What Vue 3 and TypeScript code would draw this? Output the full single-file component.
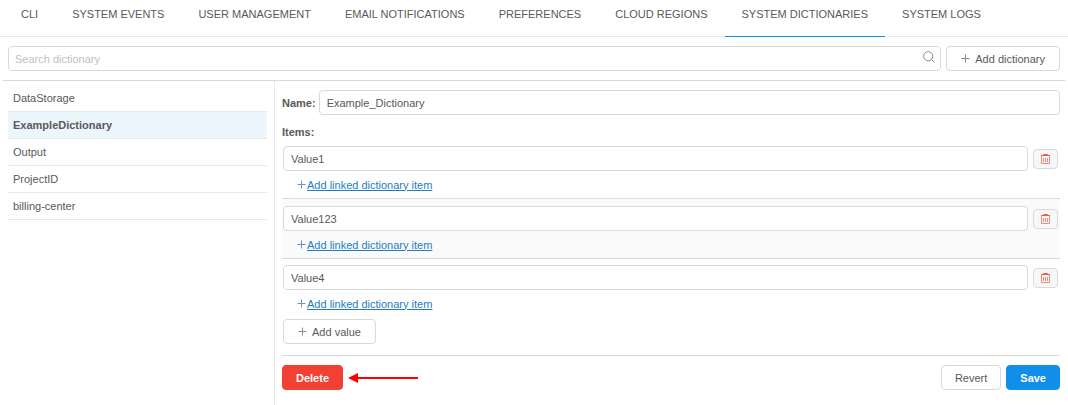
<script setup lang="ts">
import { computed, ref } from 'vue'

const tabs: string[] = [
  'CLI',
  'SYSTEM EVENTS',
  'USER MANAGEMENT',
  'EMAIL NOTIFICATIONS',
  'PREFERENCES',
  'CLOUD REGIONS',
  'SYSTEM DICTIONARIES',
  'SYSTEM LOGS',
]
const activeTab = ref('SYSTEM DICTIONARIES')

const dictionaries: string[] = ['DataStorage', 'ExampleDictionary', 'Output', 'ProjectID', 'billing-center']
const selected = ref('ExampleDictionary')

const search = ref('')
const visible = computed(() =>
  dictionaries.filter((d) => d.toLowerCase().includes(search.value.toLowerCase())),
)

const name = ref('Example_Dictionary')

interface Item {
  id: number
  value: string
}
const items = ref<Item[]>([
  { id: 1, value: 'Value1' },
  { id: 2, value: 'Value123' },
  { id: 3, value: 'Value4' },
])
let nextId = 4

function addItem(): void {
  items.value.push({ id: nextId++, value: '' })
}
function removeItem(id: number): void {
  items.value = items.value.filter((i) => i.id !== id)
}
</script>

<template>
  <div class="page">
    <nav class="tabs">
      <a
        v-for="tab in tabs"
        :key="tab"
        href="#"
        class="tab"
        :class="{ active: tab === activeTab }"
        @click.prevent="activeTab = tab"
        >{{ tab }}</a
      >
    </nav>

    <main class="content">
      <div class="toolbar">
        <div class="search">
          <input v-model="search" class="field" type="text" placeholder="Search dictionary" aria-label="Search dictionary" />
          <svg class="search-icon" viewBox="0 0 12 12" aria-hidden="true">
            <circle cx="5.2" cy="5.2" r="4.6" />
            <path d="M8.5 8.5L11.5 11.5" />
          </svg>
        </div>
        <button type="button" class="btn with-icon">
          <svg class="plus" viewBox="0 0 9 9" aria-hidden="true"><path d="M4.5 0.5V8.5M0.5 4.5H8.5" /></svg>
          Add dictionary
        </button>
      </div>

      <div class="split">
        <aside class="sidebar">
          <ul class="list">
            <li v-for="d in visible" :key="d">
              <button type="button" class="entry" :class="{ current: d === selected }" @click="selected = d">
                {{ d }}
              </button>
            </li>
          </ul>
        </aside>

        <section class="editor">
          <div class="name-row">
            <label for="dictionary-name">Name:</label>
            <input id="dictionary-name" v-model="name" class="field" type="text" />
          </div>

          <div class="items-title">Items:</div>

          <div class="items">
            <div v-for="item in items" :key="item.id" class="item">
              <div class="item-line">
                <input v-model="item.value" class="field" type="text" aria-label="Item value" />
                <button type="button" class="trash" aria-label="Remove item" @click="removeItem(item.id)">
                  <svg viewBox="0 0 9 10" aria-hidden="true">
                    <path class="lid" d="M0 1.5H9M2.5 1.5V0.5H6.5V1.5" />
                    <path d="M0.5 2V9.5H8.5V2M2.5 4V8M4.5 4V8M6.5 4V8" />
                  </svg>
                </button>
              </div>
              <div class="link-line">
                <svg class="plus" viewBox="0 0 9 9" aria-hidden="true"><path d="M4.5 0.5V8.5M0.5 4.5H8.5" /></svg>
                <a href="#" @click.prevent>Add linked dictionary item</a>
              </div>
            </div>
          </div>

          <button type="button" class="btn with-icon add-value" @click="addItem">
            <svg class="plus" viewBox="0 0 9 9" aria-hidden="true"><path d="M4.5 0.5V8.5M0.5 4.5H8.5" /></svg>
            Add value
          </button>

          <div class="actions">
            <button type="button" class="btn danger">Delete</button>
            <svg class="arrow" viewBox="0 0 70 10" aria-hidden="true">
              <path class="shaft" d="M9 5H70" />
              <path class="head" d="M0 5L10 0V10Z" />
            </svg>
            <span class="spacer"></span>
            <button type="button" class="btn">Revert</button>
            <button type="button" class="btn primary">Save</button>
          </div>
        </section>
      </div>
    </main>
  </div>
</template>

<style>
body {
  margin: 0;
  background: #fff;
}
</style>

<style scoped>
.page {
  display: flex;
  flex-direction: column;
  min-height: 100vh;
  font: 11px/16px 'Liberation Sans', Arial, sans-serif;
  color: #595959;
}
.page *,
.page {
  box-sizing: border-box;
}
button,
input {
  font: inherit;
  color: inherit;
  margin: 0;
}
button {
  cursor: pointer;
}

.tabs {
  display: flex;
  height: 37px;
  padding-left: 4px;
  box-shadow: inset 0 -1px #e9e9e9;
}
.tab {
  padding: 6px 17px 0;
  border-bottom: 1px solid transparent;
  color: inherit;
  text-decoration: none;
  white-space: nowrap;
}
.tab.active {
  border-bottom-color: #108ee9;
}

.content {
  flex: 1;
  display: flex;
  flex-direction: column;
  padding: 0 3px;
}
.toolbar {
  display: flex;
  gap: 5px;
  padding: 9px 5px;
  border-bottom: 1px solid #d9d9d9;
}
.search {
  position: relative;
  flex: 1;
  display: flex;
}
.search-icon {
  position: absolute;
  right: 6px;
  top: 5px;
  width: 12px;
  height: 12px;
  fill: none;
  stroke: #8c8c8c;
}
.field {
  flex: 1;
  min-width: 0;
  height: 25px;
  padding: 0 7px;
  border: 1px solid #d9d9d9;
  border-radius: 4px;
  background: #fff;
  outline: none;
}
.search .field {
  padding: 0 24px 0 6px;
}
.field::placeholder {
  color: #bfbfbf;
  opacity: 1;
}
.field:focus {
  border-color: #49a9ee;
}

.btn {
  display: inline-flex;
  align-items: center;
  justify-content: center;
  gap: 5px;
  height: 25px;
  padding: 0 13px;
  border: 1px solid #d9d9d9;
  border-radius: 4px;
  background: #fff;
  white-space: nowrap;
}
.with-icon {
  padding: 0 14px;
}
.plus {
  width: 9px;
  height: 9px;
  fill: none;
  stroke: #8c8c8c;
}
.danger {
  border-color: #f04134;
  background: #f04134;
  color: #fff;
  font-weight: bold;
}
.primary {
  border-color: #108ee9;
  background: #108ee9;
  color: #fff;
  font-weight: bold;
}

.split {
  flex: 1;
  display: flex;
}
.sidebar {
  flex: 0 0 272px;
  padding: 4px 7px 0 5px;
  border-right: 1px solid #e9e9e9;
}
.list {
  margin: 0;
  padding: 0;
  list-style: none;
}
.entry {
  display: block;
  width: 100%;
  height: 27px;
  padding: 0 5px;
  border: 0;
  border-bottom: 1px solid #e9e9e9;
  background: none;
  text-align: left;
}
.entry.current {
  background: #ecf6fd;
  font-weight: bold;
}

.editor {
  flex: 1;
  min-width: 0;
  padding: 9px 5px 0 7px;
}
.name-row {
  display: flex;
  align-items: center;
  gap: 3px;
  font-weight: bold;
}
.name-row .field {
  font-weight: normal;
}
.items-title {
  padding: 9px 0 0;
  font-weight: bold;
}
.item {
  padding: 7px 2px 0 1px;
  border-bottom: 1px solid #d9d9d9;
}
.item:nth-child(even) {
  background: #fafafa;
}
.item:first-child,
.item:last-child {
  padding-top: 6px;
}
.item:last-child {
  border-bottom: 0;
}
.item-line {
  display: flex;
  align-items: center;
  gap: 5px;
}
.trash {
  display: flex;
  align-items: center;
  justify-content: center;
  width: 25px;
  height: 20px;
  padding: 0;
  border: 1px solid #d9d9d9;
  border-radius: 4px;
  background: #f7f7f7;
}
.trash svg {
  width: 9px;
  height: 10px;
  fill: none;
  stroke: #f28a80;
}
.trash .lid {
  stroke: #ee5a50;
}
.link-line {
  display: flex;
  align-items: center;
  gap: 1px;
  height: 27px;
  padding-left: 14px;
}
.link-line .plus {
  stroke: #6f93ba;
}
.link-line a {
  color: #1f7dc4;
  text-decoration: underline;
}
.add-value {
  margin: 2px 0 0 1px;
}
.actions {
  display: flex;
  align-items: center;
  gap: 5px;
  margin-top: 11px;
  padding: 9px 0;
  border-top: 1px solid #d9d9d9;
}
.arrow {
  width: 70px;
  height: 10px;
}
.shaft {
  fill: none;
  stroke: #f00;
  stroke-width: 2;
}
.head {
  fill: #f00;
}
.spacer {
  flex: 1;
}
</style>
